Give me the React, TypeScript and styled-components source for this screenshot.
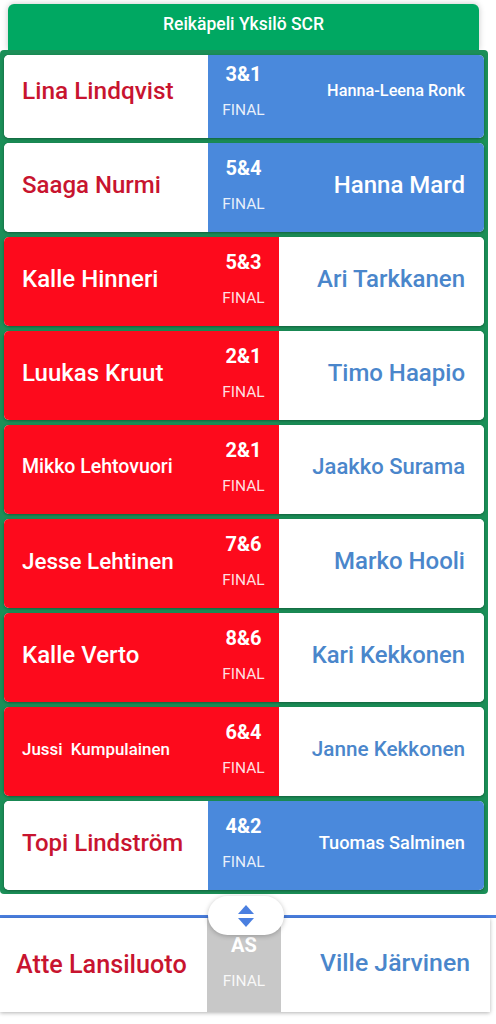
import React from "react";
import styled, { createGlobalStyle } from "styled-components";

const Global = createGlobalStyle`
  html, body { margin: 0; padding: 0; background: #ffffff; }
  body { font-family: Roboto, "Noto Sans", Arial, sans-serif; }
  * { box-sizing: border-box; }
`;

const Page = styled.div`
  width: 496px;
  height: 1024px;
  overflow: hidden;
  padding-top: 4px;
`;

const Header = styled.div`
  margin: 0 17px 0 8px;
  height: 46px;
  background: #00a862;
  border-radius: 6px 6px 0 0;
  box-shadow: 0 0 6px rgba(0, 0, 0, 0.22);
  color: #ffffff;
  font-size: 17.5px;
  font-weight: 500;
  text-align: center;
  padding-top: 10px;
  line-height: 20px;
`;

const List = styled.div`
  width: 488px;
  background: #1b8f58;
  border-radius: 4px;
  padding: 5px 4px 4px 4px;
  display: flex;
  flex-direction: column;
  gap: 5px;
  position: relative;
`;

const Row = styled.div<{ $trim?: number }>`
  height: ${(p) => 89 - (p.$trim || 0)}px;
  border-radius: 5px;
  overflow: hidden;
  box-shadow: 0 1px 3px rgba(0, 0, 0, 0.35);
  background: #ffffff;
`;

const RowGrid = styled.div<{ $trim?: number }>`
  height: 89px;
  margin-top: ${(p) => -(p.$trim || 0)}px;
  display: grid;
  grid-template-columns: 204px 71px 1fr;
`;

const LeftCell = styled.div<{ $win: boolean }>`
  background: ${(p) => (p.$win ? "#fd0a1c" : "#ffffff")};
  color: ${(p) => (p.$win ? "#ffffff" : "#c8142f")};
  display: flex;
  align-items: center;
  padding: 0 0 5px 18px;
  font-weight: 500;
  white-space: pre;
`;

const RightCell = styled.div<{ $win: boolean }>`
  background: ${(p) => (p.$win ? "#4a89dc" : "#ffffff")};
  color: ${(p) => (p.$win ? "#ffffff" : "#4a86cb")};
  display: flex;
  align-items: center;
  justify-content: flex-end;
  padding: 0 19px 5px 0;
  font-weight: 500;
  white-space: pre;
`;

const ScoreCell = styled.div<{ $bg: string }>`
  background: ${(p) => p.$bg};
  color: #ffffff;
  display: flex;
  flex-direction: column;
  align-items: center;
  padding-top: 14px;
`;

const Score = styled.div`
  font-size: 20px;
  font-weight: 700;
  line-height: 22px;
`;

const Final = styled.div`
  font-size: 15.5px;
  font-weight: 400;
  line-height: 20px;
  margin-top: 15px;
  color: rgba(255, 255, 255, 0.88);
`;

const Name = styled.span<{ $size: number }>`
  font-size: ${(p) => p.$size}px;
  line-height: 1.2;
`;

const Bottom = styled.div`
  margin-top: 21px;
  border-top: 3px solid #4a7fe0;
  position: relative;
`;

const BottomCard = styled.div`
  width: 490px;
  height: 94px;
  background: #ffffff;
  box-shadow: 0 1px 4px rgba(0, 0, 0, 0.3);
  display: grid;
  grid-template-columns: 207px 74px 1fr;
`;

const BottomLeft = styled.div`
  display: flex;
  align-items: center;
  padding: 0 0 0 16px;
  color: #c8142f;
  font-weight: 500;
`;

const BottomRight = styled.div`
  display: flex;
  align-items: center;
  justify-content: flex-end;
  padding: 0 20px 5px 0;
  color: #4a86cb;
  font-weight: 500;
`;

const BottomScore = styled(ScoreCell)`
  padding-top: 16px;
`;

const Toggle = styled.button`
  position: absolute;
  left: 208px;
  top: -22px;
  width: 76px;
  height: 39px;
  border: none;
  border-radius: 20px;
  background: #ffffff;
  box-shadow: 0 1px 5px rgba(0, 0, 0, 0.25);
  display: flex;
  flex-direction: column;
  align-items: center;
  justify-content: center;
  gap: 4px;
  padding: 0;
  z-index: 2;
`;

type Match = {
  left: string;
  ls: number;
  right: string;
  rs: number;
  score: string;
  winner: "left" | "right";
};

const matches: Match[] = [
  { left: "Lina Lindqvist", ls: 24.4, right: "Hanna-Leena Ronk", rs: 16.3, score: "3&1", winner: "right" },
  { left: "Saaga Nurmi", ls: 24, right: "Hanna Mard", rs: 24, score: "5&4", winner: "right" },
  { left: "Kalle Hinneri", ls: 24, right: "Ari Tarkkanen", rs: 24, score: "5&3", winner: "left" },
  { left: "Luukas Kruut", ls: 24, right: "Timo Haapio", rs: 24, score: "2&1", winner: "left" },
  { left: "Mikko Lehtovuori", ls: 19.5, right: "Jaakko Surama", rs: 22, score: "2&1", winner: "left" },
  { left: "Jesse Lehtinen", ls: 22.4, right: "Marko Hooli", rs: 24, score: "7&6", winner: "left" },
  { left: "Kalle Verto", ls: 24, right: "Kari Kekkonen", rs: 23.8, score: "8&6", winner: "left" },
  { left: "Jussi  Kumpulainen", ls: 16.9, right: "Janne Kekkonen", rs: 20.7, score: "6&4", winner: "left" },
  { left: "Topi Lindström", ls: 24, right: "Tuomas Salminen", rs: 18.2, score: "4&2", winner: "right" },
];

const Arrows = () => (
  <>
    <svg width="16" height="9" viewBox="0 0 16 9">
      <polygon points="8,0 16,9 0,9" fill="#4a7fe0" />
    </svg>
    <svg width="16" height="9" viewBox="0 0 16 9">
      <polygon points="0,0 16,0 8,9" fill="#4a7fe0" />
    </svg>
  </>
);

export default function App() {
  return (
    <Page>
      <Global />
      <Header>Reikäpeli Yksilö SCR</Header>
      <List>
        {matches.map((m, i) => {
          const trim = i === 0 ? 6 : 0;
          const leftWin = m.winner === "left";
          return (
            <Row key={i} $trim={trim}>
              <RowGrid $trim={trim}>
                <LeftCell $win={leftWin}>
                  <Name $size={m.ls}>{m.left}</Name>
                </LeftCell>
                <ScoreCell $bg={leftWin ? "#fd0a1c" : "#4a89dc"}>
                  <Score>{m.score}</Score>
                  <Final>FINAL</Final>
                </ScoreCell>
                <RightCell $win={!leftWin}>
                  <Name $size={m.rs}>{m.right}</Name>
                </RightCell>
              </RowGrid>
            </Row>
          );
        })}
      </List>
      <Bottom>
        <Toggle aria-label="toggle">
          <Arrows />
        </Toggle>
        <BottomCard>
          <BottomLeft>
            <Name $size={25.2}>Atte Lansiluoto</Name>
          </BottomLeft>
          <BottomScore $bg="#c8c8c8">
            <Score>AS</Score>
            <Final>FINAL</Final>
          </BottomScore>
          <BottomRight>
            <Name $size={24.8}>Ville Järvinen</Name>
          </BottomRight>
        </BottomCard>
      </Bottom>
    </Page>
  );
}
